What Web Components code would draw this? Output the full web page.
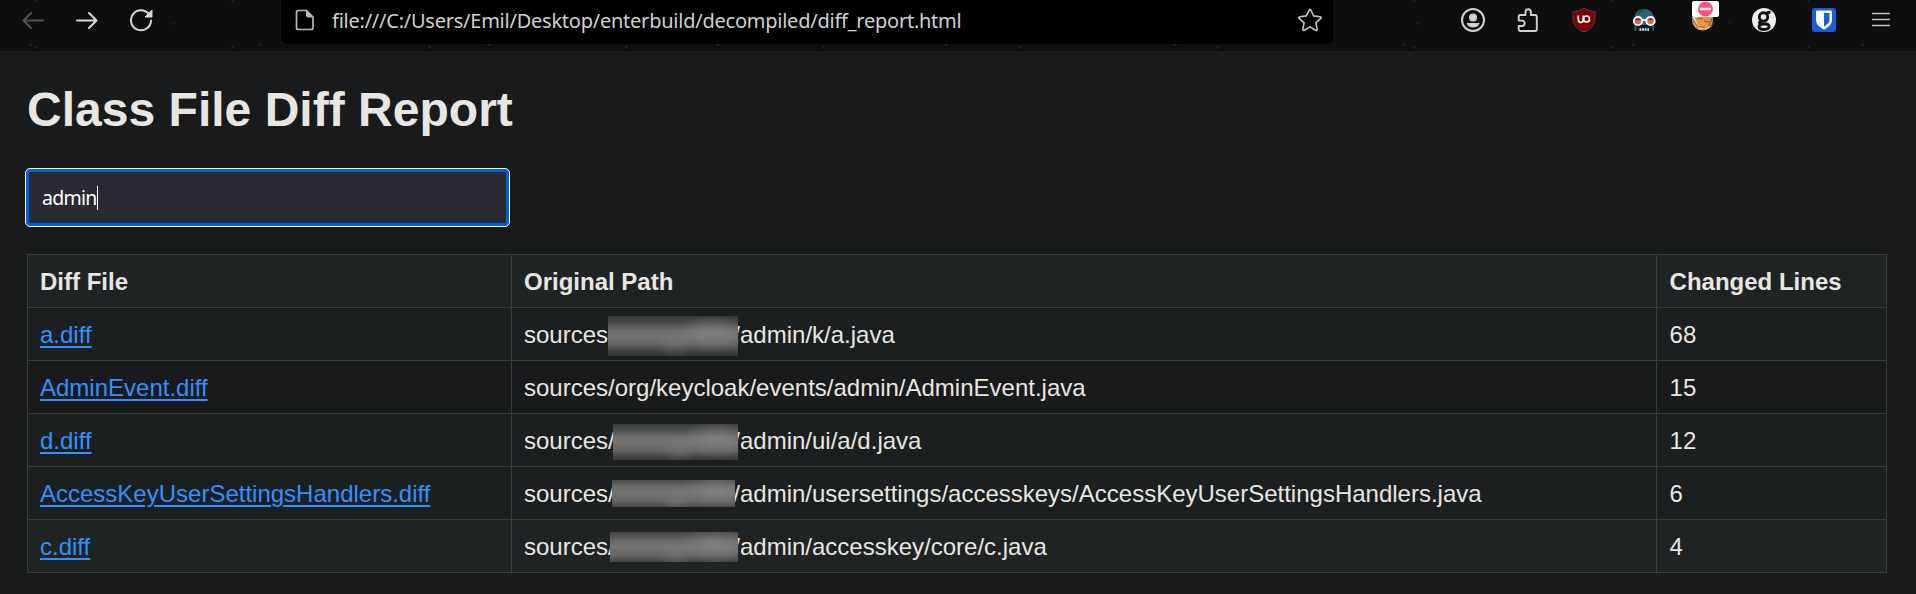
<!DOCTYPE html>
<html lang="en">
<head>
<meta charset="utf-8">
<title>Class File Diff Report</title>
<style>
body{margin:0;background:#191a1b;color:#e8e6e3;font:24px/28px "Liberation Sans",Arial,sans-serif;height:594px;overflow:hidden}
</style>
</head>
<body>
<browser-bar>file:///C:/Users/Emil/Desktop/enterbuild/decompiled/diff_report.html</browser-bar>
<report-page>
  <span slot="title">Class File Diff Report</span>
  <filter-input slot="filter">admin</filter-input>
  <diff-table></diff-table>
</report-page>
<script>
const define = (name, html) => customElements.define(name, class extends HTMLElement {
  constructor() { super(); this.attachShadow({mode: 'open'}).innerHTML = html; }
});

define('browser-bar', `
<style>
:host{display:grid;grid-template-columns:281px 1052px 1fr;height:51px;background-color:#0e0e0e;color:#d0d0d0;
 background-image:radial-gradient(circle,#241f1f 0 1px,transparent 2px),radial-gradient(circle,#1e1e1e 0 1px,transparent 2px),radial-gradient(circle,#1c1919 0 1px,transparent 2px);
 background-size:229px 51px,197px 47px,311px 39px;background-position:145px 19px,134px -23px,18px 4px}
svg{display:block;flex:none}
nav{display:flex;align-items:flex-start;padding:8px 0 0 21px;gap:30px}
.url{display:flex;align-items:flex-start;background:#000;height:44px;border-radius:0 0 6px 6px;box-sizing:border-box;padding:8px 10px 0 12px;font:20px/28px "Noto Sans","Segoe UI",sans-serif;color:#d0d0d0}
.text{margin:-1px auto 0 15px;white-space:nowrap;width:629px;letter-spacing:-.24px}
.tools{display:grid;grid-template-columns:55px 56px 60px 60px 60px 60px 60px 24px;align-items:start;padding:8px 0 0 128px;box-sizing:border-box;overflow:hidden}
.fox{position:relative}
.badge{position:absolute;left:0;top:-7px}
</style>
<nav>
 <svg width="24" height="24" viewBox="0 0 24 24" fill="none" stroke="#555" stroke-width="2" stroke-linecap="round" stroke-linejoin="round"><path d="M22 12.500H3M10 5L2.500 12.500 10 20"/></svg>
 <svg width="24" height="24" viewBox="0 0 24 24" fill="none" stroke="#d8d8d8" stroke-width="2" stroke-linecap="round" stroke-linejoin="round"><path d="M2 12.500h19M14 5l7.500 7.500L14 20"/></svg>
 <svg width="24" height="24" viewBox="0 0 24 24"><path d="M20.500 7A10 10 0 1 0 22 12.500" fill="none" stroke="#d8d8d8" stroke-width="2" stroke-linecap="round"/><path d="M23 2v7h-7z" fill="#d8d8d8" stroke="#d8d8d8" stroke-linejoin="round"/></svg>
</nav>
<div class="url">
 <svg width="24" height="24" viewBox="0 0 24 24"><path d="M5.500 2.500H13.500L20 9V19.500a2 2 0 0 1-2 2H5.500a2 2 0 0 1-2-2v-15a2 2 0 0 1 2-2z" fill="none" stroke="#b8b8b8" stroke-width="1.700"/><path d="M13 2l7.500 7.500H15a2 2 0 0 1-2-2z" fill="#b8b8b8"/></svg>
 <span class="text"><slot></slot></span>
 <svg width="26" height="24" viewBox="0 0 26 24"><path d="M12.200 2.100q.8-1.500 1.600 0l2.800 5.800 6.600.9q1.600.4.600 1.600l-4.900 4.500 1.300 6.400q0 1.600-1.500 1L13 18.900l-5.700 3.400q-1.500.6-1.500-1L7.100 14.900 2.200 10.400q-1-1.200.6-1.600l6.600-.9z" fill="none" stroke="#c4c4c4" stroke-width="1.600" stroke-linejoin="round"/></svg>
</div>
<div class="tools">
 <svg width="24" height="24" viewBox="0 0 24 24"><circle cx="12" cy="12" r="11" fill="none" stroke="#d2d2d2" stroke-width="2"/><circle cx="12" cy="9.500" r="4" fill="#d2d2d2"/><path d="M5.500 15h13c-.8 3-3.500 4.500-6.500 4.500S6.300 18 5.500 15z" fill="#d2d2d2"/></svg>
 <svg width="24" height="24" viewBox="0 0 24 24"><path d="M5 7H9.500V4a2.700 2.700 0 0 1 5.400 0V7H19a1.800 1.800 0 0 1 1.800 1.800V21.200A1.800 1.800 0 0 1 19 23H4.500a1.800 1.800 0 0 1-1.800-1.800V18H6a2.700 2.700 0 0 0 0-5.400H2.700V8.800A1.800 1.800 0 0 1 4.500 7z" fill="none" stroke="#d2d2d2" stroke-width="1.900" stroke-linejoin="round"/></svg>
 <svg width="24" height="24" viewBox="0 0 24 24"><path d="M12 0c3.500 2.500 7 3.300 11 3.500V10c0 7-4.500 11.500-11 14C5.500 21.500 1 17 1 10V3.500C5 3.300 8.500 2.500 12 0z" fill="#800000" stroke="#4c4545"/><path d="M6.300 7.500v4.300a2.500 2.500 0 0 0 5 0V7.500M11.300 13.500V11" fill="none" stroke="#fff" stroke-width="1.700"/><circle cx="14.500" cy="11" r="3" fill="none" stroke="#fff" stroke-width="1.700"/></svg>
 <svg width="24" height="24" viewBox="0 0 24 24"><path d="M2.500 11C2.500 4.500 7 1 12.200 1S22 4.500 22 11v12h-1.500v-4h-16v4H2.500z" fill="#296477"/><path d="M6 6q2-3 5-3.500" stroke="#17404d" fill="none" stroke-width="1.200"/><path d="M4.500 17h15.500v6H4.500z" fill="#101820"/><path d="M7.500 21.500h9.500" stroke="#d5e8ed" stroke-width="2.400" stroke-dasharray="1.800 .8"/><circle cx="6" cy="13" r="4.200" fill="#e3664b" stroke="#fff" stroke-width="1.800"/><circle cx="18.500" cy="13" r="4.200" fill="#e3664b" stroke="#fff" stroke-width="1.800"/><path d="M10 12h4.500" stroke="#fff" stroke-width="1.800"/><path d="M2.700 12q3.300-3 6.600 0zM15.200 12q3.300-3 6.600 0z" fill="#563032"/></svg>
 <div class="fox"><svg width="25" height="24" viewBox="0 0 25 24"><circle cx="10.500" cy="12" r="10.500" fill="#f19335"/><path d="M-1 9l4 0 3 8 9 3 6-3 1-4-1.500 4.500-4 3-8 .5-5-3z" fill="#d9d6cc"/><path d="M3 8h18l-3 10-7 2-5-4z" fill="#f19335"/><path d="M0 10l5 8 8 2M12 13l5 1M6 10l5 1M20 10l-3 8" fill="none" stroke="#666" stroke-width="1.200"/></svg>
  <svg class="badge" width="27" height="16" viewBox="0 0 27 16"><rect width="27" height="16" rx="2" fill="#fff"/><circle cx="13.500" cy="8" r="7.500" fill="#ff4f7b"/><path d="M8 8h11" stroke="#ffe9ee" stroke-width="2.500"/></svg></div>
 <svg width="24" height="24" viewBox="0 0 24 24"><circle cx="12" cy="12" r="12" fill="#eee"/><g fill="none" stroke="#111" stroke-width="2.900"><circle cx="11.500" cy="9" r="4.200"/><path d="M14 6.500q1-2.500 4.500-2.200M9 13q-3 2 0 3h5q3.500.5 3 3c-.5 3-10 3.500-10 0q0-2 3-3"/></g></svg>
 <svg width="24" height="24" viewBox="0 0 24 24"><rect width="24" height="24" rx="3" fill="#175ddc"/><path d="M4 3.500q0-1 1-1h14q1 0 1 1V12c0 4.500-4 7.500-8 9.500C8 19.500 4 16.500 4 12z" fill="#fff"/><path d="M12 5h5.500v7c0 3-3 5-5.500 6.700z" fill="#175ddc"/></svg>
 <svg width="18" height="24" viewBox="0 0 18 24"><path d="M0 5.500h18M0 11.500h18M0 17.500h18" stroke="#c4c4c4" stroke-width="1.700"/></svg>
</div>`);

define('report-page', `
<style>
:host{display:block;padding:31px 29px 0 27px}
h1{margin:0 0 30px;font-size:48px;line-height:56px;font-weight:700;letter-spacing:.02px;white-space:nowrap}
</style>
<h1><slot name="title"></slot></h1>
<slot name="filter"></slot>
<slot></slot>`);

define('filter-input', `
<style>
:host{display:flex;align-items:center;box-sizing:border-box;width:485px;height:59px;margin:0 0 27px -2px;padding-left:14px;border:1px solid #fff;border-radius:5px;background:#2b2a33;box-shadow:inset 0 0 0 3px #0060df;color:#fff;font:19.500px/24px "Noto Sans","Segoe UI",sans-serif}
span{display:flex;align-items:center;padding-left:2px;letter-spacing:-.75px}
i{width:1px;height:24px;background:#fff}
</style>
<span><slot></slot></span><i></i>`);

define('redacted-text', `
<style>
:host{display:inline-block;position:relative;width:var(--space);height:28px;vertical-align:top}
i{position:absolute;left:var(--l);top:var(--t);width:var(--w);height:var(--h);overflow:hidden;background:#3e403f}
i::before{content:"";position:absolute;left:0;right:0;top:var(--o);height:40px;
 background:radial-gradient(ellipse 34px 20px at 104px 17px,#8b8b8b88,transparent),radial-gradient(ellipse 18px 14px at 66px 28px,#80808060,transparent),linear-gradient(#333534,#4c4d4c 18%,#6c6c6b 36%,#757473 50%,#656564 70%,#414342 88%,#323433)}
</style><i></i>`);

define('diff-row', `
<style>
:host{display:grid;grid-template-columns:483px 1144px 229px;column-gap:1px;height:52px;background:#3a3d3e}
div{background:var(--row);padding:13px 0 0 12px;white-space:nowrap;height:39px;line-height:28px}
div:last-child{padding-left:12.600px}
:host([head]) div{font-weight:700}
::slotted(a){color:#3391ff;text-decoration:underline;text-decoration-thickness:2px;text-underline-offset:3px}
</style>
<div><slot name="file"></slot></div><div><slot name="path"></slot></div><div><slot name="lines"></slot></div>`);

customElements.define('diff-table', class extends HTMLElement {
  constructor() {
    super();
    const mask = (space, l, t, w, h, o) => `<redacted-text style="--space:${space}px;--l:${l}px;--t:${t}px;--w:${w}px;--h:${h}px;--o:${o}px"></redacted-text>`;
    const rows = [
      ['a.diff', 'sources' + mask(125.3, 0, -5, 130, 40, 0) + '/admin/k/a.java', 68, '#1b1f20'],
      ['AdminEvent.diff', 'sources/org/keycloak/events/admin/AdminEvent.java', 15, '#191a1b'],
      ['d.diff', 'sources/' + mask(118.6, -2, -3, 125, 36, -2) + '/admin/ui/a/d.java', 12, '#1b1f20'],
      ['AccessKeyUserSettingsHandlers.diff', 'sources/' + mask(118.6, -3, 0, 123, 27, -7) + '/admin/usersettings/accesskeys/AccessKeyUserSettingsHandlers.java', 6, '#1b1f20'],
      ['c.diff', 'sources/' + mask(118.6, -5, -1, 128, 30, -5) + '/admin/accesskey/core/c.java', 4, '#1f2324']
    ];
    this.attachShadow({mode: 'open'}).innerHTML = `
<style>:host{display:flex;flex-direction:column;gap:1px;padding:1px;background:#3a3d3e;width:1858px}</style>
<diff-row head style="--row:#1f2324"><span slot="file">Diff File</span><span slot="path">Original Path</span><span slot="lines">Changed Lines</span></diff-row>
${rows.map(([f, p, n, c]) => `<diff-row style="--row:${c}"><a slot="file" href="#">${f}</a><span slot="path">${p}</span><span slot="lines">${n}</span></diff-row>`).join('')}`;
  }
});
</script>
</body>
</html>
